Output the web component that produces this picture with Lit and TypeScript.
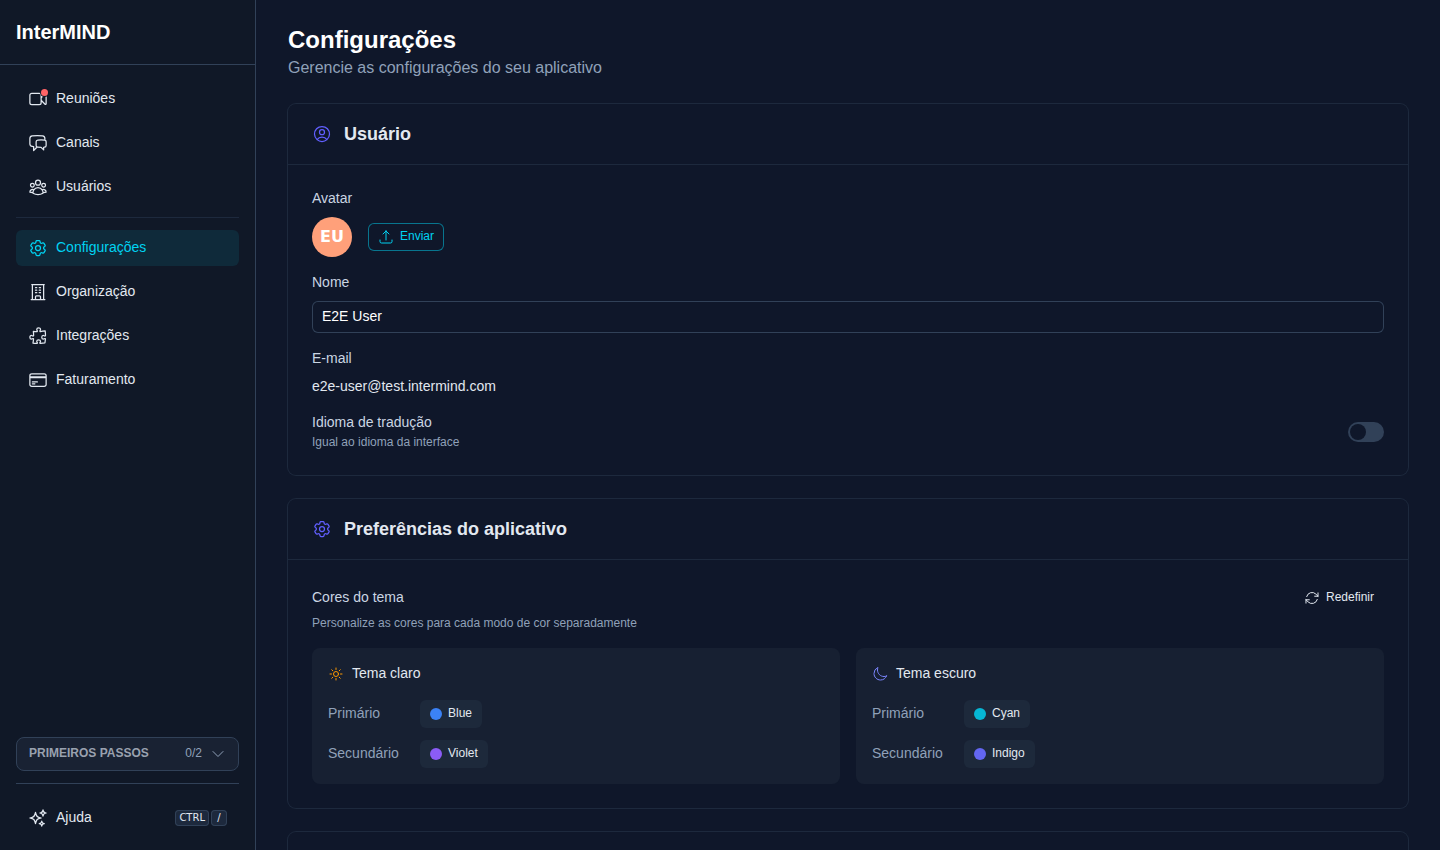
import { LitElement, html, css, svg } from "lit";
import { customElement, property } from "lit/decorators.js";
import { classMap } from "lit/directives/class-map.js";

const ICONS: Record<string, string> = {
  video:
    "m15.75 10.5 4.72-4.72a.75.75 0 0 1 1.28.53v11.38a.75.75 0 0 1-1.28.53l-4.72-4.72M4.5 18.75h9a2.25 2.25 0 0 0 2.25-2.25v-9a2.25 2.25 0 0 0-2.25-2.25h-9A2.25 2.25 0 0 0 2.25 7.5v9a2.25 2.25 0 0 0 2.25 2.25Z",
  chat:
    "M20.25 8.511c.884.284 1.5 1.128 1.5 2.097v4.286c0 1.136-.847 2.1-1.98 2.193-.34.027-.68.052-1.02.072v3.091l-3-3c-1.354 0-2.694-.055-4.02-.163a2.115 2.115 0 0 1-.825-.242m9.345-8.334a2.126 2.126 0 0 0-.476-.095 48.64 48.64 0 0 0-8.048 0c-1.131.094-1.976 1.057-1.976 2.192v4.286c0 .837.46 1.58 1.155 1.951m9.345-8.334V6.637c0-1.621-1.152-3.026-2.76-3.235A48.455 48.455 0 0 0 11.25 3c-2.115 0-4.198.137-6.24.402-1.608.209-2.76 1.614-2.76 3.235v6.226c0 1.621 1.152 3.026 2.76 3.235.577.075 1.157.14 1.74.194V21l4.155-4.155",
  group:
    "M18 18.72a9.094 9.094 0 0 0 3.741-.479 3 3 0 0 0-4.682-2.72m.94 3.198.001.031c0 .225-.012.447-.037.666A11.944 11.944 0 0 1 12 21c-2.17 0-4.207-.576-5.963-1.584A6.062 6.062 0 0 1 6 18.719m12 0a5.971 5.971 0 0 0-.941-3.197m0 0A5.995 5.995 0 0 0 12 12.75a5.995 5.995 0 0 0-5.058 2.772m0 0a3 3 0 0 0-4.681 2.72 8.986 8.986 0 0 0 3.74.477m.94-3.197a5.971 5.971 0 0 0-.94 3.197M15 6.75a3 3 0 1 1-6 0 3 3 0 0 1 6 0Zm6 3a2.25 2.25 0 1 1-4.5 0 2.25 2.25 0 0 1 4.5 0Zm-13.5 0a2.25 2.25 0 1 1-4.5 0 2.25 2.25 0 0 1 4.5 0Z",
  cog:
    "M9.594 3.94c.09-.542.56-.94 1.11-.94h2.593c.55 0 1.02.398 1.11.94l.213 1.281c.063.374.313.686.645.87.074.04.147.083.22.127.325.196.72.257 1.075.124l1.217-.456a1.125 1.125 0 0 1 1.37.49l1.296 2.247a1.125 1.125 0 0 1-.26 1.431l-1.003.827c-.293.241-.438.613-.43.992a7.723 7.723 0 0 1 0 .255c-.008.378.137.75.43.991l1.004.827c.424.35.534.955.26 1.43l-1.298 2.247a1.125 1.125 0 0 1-1.369.491l-1.217-.456c-.355-.133-.75-.072-1.076.124a6.47 6.47 0 0 1-.22.128c-.331.183-.581.495-.644.869l-.213 1.281c-.09.543-.56.94-1.11.94h-2.594c-.55 0-1.019-.398-1.11-.94l-.213-1.281c-.062-.374-.312-.686-.644-.87a6.52 6.52 0 0 1-.22-.127c-.325-.196-.72-.257-1.076-.124l-1.217.456a1.125 1.125 0 0 1-1.369-.49l-1.297-2.247a1.125 1.125 0 0 1 .26-1.431l1.004-.827c.292-.24.437-.613.43-.991a6.932 6.932 0 0 1 0-.255c.007-.38-.138-.751-.43-.992l-1.004-.827a1.125 1.125 0 0 1-.26-1.43l1.297-2.247a1.125 1.125 0 0 1 1.37-.491l1.216.456c.356.133.751.072 1.076-.124.072-.044.146-.086.22-.128.332-.183.582-.495.644-.869l.214-1.28ZM15 12a3 3 0 1 1-6 0 3 3 0 0 1 6 0Z",
  building:
    "M3.75 21h16.5M4.5 3h15M5.25 3v18m13.5-18v18M9 6.75h1.5m-1.5 3h1.5m-1.5 3h1.5m3-6H15m-1.5 3H15m-1.5 3H15M9 21v-3.375c0-.621.504-1.125 1.125-1.125h3.75c.621 0 1.125.504 1.125 1.125V21",
  puzzle:
    "M14.25 6.087c0-.355.186-.676.401-.959.221-.29.349-.634.349-1.003 0-1.036-1.007-1.875-2.25-1.875s-2.25.84-2.25 1.875c0 .369.128.713.349 1.003.215.283.401.604.401.959v0a.64.64 0 0 1-.657.643 48.39 48.39 0 0 1-4.163-.3c.186 1.613.293 3.25.315 4.907a.656.656 0 0 1-.658.663v0c-.355 0-.676-.186-.959-.401a1.647 1.647 0 0 0-1.003-.349c-1.036 0-1.875 1.007-1.875 2.25s.84 2.25 1.875 2.25c.369 0 .713-.128 1.003-.349.283-.215.604-.401.959-.401v0c.31 0 .555.26.532.57a48.039 48.039 0 0 1-.642 5.056c1.518.19 3.058.309 4.616.354a.64.64 0 0 0 .657-.643v0c0-.355-.186-.676-.401-.959a1.647 1.647 0 0 1-.349-1.003c0-1.035 1.008-1.875 2.25-1.875 1.243 0 2.25.84 2.25 1.875 0 .369-.128.713-.349 1.003-.215.283-.4.604-.4.959v0c0 .333.277.599.61.58a48.1 48.1 0 0 0 5.427-.63 48.05 48.05 0 0 0 .582-4.717.532.532 0 0 0-.533-.57v0c-.355 0-.676.186-.959.401-.29.221-.634.349-1.003.349-1.035 0-1.875-1.007-1.875-2.25s.84-2.25 1.875-2.25c.37 0 .713.128 1.003.349.283.215.604.401.96.401v0a.656.656 0 0 0 .658-.663 48.422 48.422 0 0 0-.37-5.36c-1.886.342-3.81.574-5.766.689a.578.578 0 0 1-.61-.58v0Z",
  card:
    "M2.25 8.25h19.5M2.25 9h19.5m-16.5 5.25h6m-6 2.25h3m-3.75 3h15a2.25 2.25 0 0 0 2.25-2.25V6.75A2.25 2.25 0 0 0 19.5 4.5h-15a2.25 2.25 0 0 0-2.25 2.25v10.5A2.25 2.25 0 0 0 4.5 19.5Z",
  sparkles:
    "M9.813 15.904 9 18.75l-.813-2.846a4.5 4.5 0 0 0-3.09-3.09L2.25 12l2.846-.813a4.5 4.5 0 0 0 3.09-3.09L9 5.25l.813 2.846a4.5 4.5 0 0 0 3.09 3.09L15.75 12l-2.846.813a4.5 4.5 0 0 0-3.09 3.09ZM18.259 8.715 18 9.75l-.259-1.035a3.375 3.375 0 0 0-2.455-2.456L14.25 6l1.036-.259a3.375 3.375 0 0 0 2.455-2.456L18 2.25l.259 1.035a3.375 3.375 0 0 0 2.456 2.456L21.75 6l-1.035.259a3.375 3.375 0 0 0-2.456 2.456ZM16.894 20.567 16.5 21.75l-.394-1.183a2.25 2.25 0 0 0-1.423-1.423L13.5 18.75l1.183-.394a2.25 2.25 0 0 0 1.423-1.423l.394-1.183.394 1.183a2.25 2.25 0 0 0 1.423 1.423l1.183.394-1.183.394a2.25 2.25 0 0 0-1.423 1.423Z",
  user:
    "M17.982 18.725A7.488 7.488 0 0 0 12 15.75a7.488 7.488 0 0 0-5.982 2.975m11.963 0a9 9 0 1 0-11.963 0m11.963 0A8.966 8.966 0 0 1 12 21a8.966 8.966 0 0 1-5.982-2.275M15 9.75a3 3 0 1 1-6 0 3 3 0 0 1 6 0Z",
  upload:
    "M3 16.5v2.25A2.25 2.25 0 0 0 5.25 21h13.5A2.25 2.25 0 0 0 21 18.75V16.5m-13.5-9L12 3m0 0 4.5 4.5M12 3v13.5",
  refresh:
    "M16.023 9.348h4.992v-.001M2.985 19.644v-4.992m0 0h4.992m-4.993 0 3.181 3.183a8.25 8.25 0 0 0 13.803-3.7M4.031 9.865a8.25 8.25 0 0 1 13.803-3.7l3.181 3.182m0-4.991v4.99",
  sun:
    "M12 3v2.25m6.364.386-1.591 1.591M21 12h-2.25m-.386 6.364-1.591-1.591M12 18.75V21m-4.773-4.227-1.591 1.591M5.25 12H3m4.227-4.773L5.636 5.636M15.75 12a3.75 3.75 0 1 1-7.5 0 3.75 3.75 0 0 1 7.5 0Z",
  moon:
    "M21.752 15.002A9.72 9.72 0 0 1 18 15.75c-5.385 0-9.75-4.365-9.75-9.75 0-1.33.266-2.597.748-3.752A9.753 9.753 0 0 0 3 11.25C3 16.635 7.365 21 12.75 21a9.753 9.753 0 0 0 9.002-5.998Z",
  chevron: "m19.5 8.25-7.5 7.5-7.5-7.5",
};

@customElement("ui-icon")
class UiIcon extends LitElement {
  @property() name = "";

  static styles = css`
    :host {
      display: block;
      flex: none;
      width: 20px;
      height: 20px;
    }
    .glyph {
      display: block;
      width: 100%;
      height: 100%;
      fill: none;
      stroke: currentColor;
      stroke-width: 1.5;
      stroke-linecap: round;
      stroke-linejoin: round;
    }
  `;

  render() {
    return html`<svg class="glyph" viewBox="0 0 24 24" aria-hidden="true">
      ${svg`<path d=${ICONS[this.name] ?? ""}></path>`}
    </svg>`;
  }
}

interface NavItem {
  label: string;
  icon: string;
  active?: boolean;
  alert?: boolean;
}

const PRIMARY_NAV: NavItem[] = [
  { label: "Reuniões", icon: "video", alert: true },
  { label: "Canais", icon: "chat" },
  { label: "Usuários", icon: "group" },
];

const SETTINGS_NAV: NavItem[] = [
  { label: "Configurações", icon: "cog", active: true },
  { label: "Organização", icon: "building" },
  { label: "Integrações", icon: "puzzle" },
  { label: "Faturamento", icon: "card" },
];

interface ThemePanel {
  title: string;
  icon: string;
  rows: { label: string; color: string; swatch: string }[];
}

const THEMES: ThemePanel[] = [
  {
    title: "Tema claro",
    icon: "sun",
    rows: [
      { label: "Primário", color: "Blue", swatch: "blue" },
      { label: "Secundário", color: "Violet", swatch: "violet" },
    ],
  },
  {
    title: "Tema escuro",
    icon: "moon",
    rows: [
      { label: "Primário", color: "Cyan", swatch: "cyan" },
      { label: "Secundário", color: "Indigo", swatch: "indigo" },
    ],
  },
];

@customElement("app-root")
class AppRoot extends LitElement {
  static styles = css`
    :host {
      display: flex;
      height: 100vh;
      overflow: hidden;
      background: #0f172a;
      color: #e2e8f0;
      font-family: "Liberation Sans", Arial, sans-serif;
      font-size: 14px;
      line-height: 20px;
    }
    * {
      box-sizing: border-box;
    }
    h1,
    h2,
    h3,
    p {
      margin: 0;
    }
    button,
    input {
      margin: 0;
      font: inherit;
      color: inherit;
    }
    button {
      cursor: pointer;
    }
    .small {
      width: 16px;
      height: 16px;
    }

    /* sidebar */
    .sidebar {
      display: flex;
      flex-direction: column;
      flex: none;
      width: 256px;
      background: #101827;
      border-right: 1px solid #314158;
    }
    .brand {
      padding: 16px;
      border-bottom: 1px solid #314158;
      color: #ffffff;
      font-size: 20px;
      font-weight: 700;
      line-height: 32px;
    }
    .nav {
      display: flex;
      flex-direction: column;
      flex: 1;
      padding: 16px 16px 0;
    }
    .nav-list {
      display: flex;
      flex-direction: column;
      gap: 8px;
      margin: 0;
      padding: 0;
      list-style: none;
    }
    .nav-list + .nav-list {
      margin-top: 12px;
      padding-top: 12px;
      border-top: 1px solid #1d293d;
    }
    .nav-link {
      display: flex;
      align-items: center;
      gap: 8px;
      width: 100%;
      height: 36px;
      padding: 0 12px;
      border: 0;
      border-radius: 6px;
      background: none;
      color: #e2e8f0;
      text-align: left;
      text-decoration: none;
    }
    .nav-text {
      padding-bottom: 2px;
    }
    .nav-link.active {
      background: #0f2a3a;
      color: #00d3f2;
    }
    .nav-icon {
      position: relative;
    }
    .badge {
      position: absolute;
      top: 0;
      right: 0;
      width: 7px;
      height: 7px;
      border-radius: 50%;
      background: #ff6467;
      box-shadow: 0 0 0 1px #101827;
    }
    .sidebar-foot {
      display: flex;
      flex-direction: column;
      padding: 0 16px 14px;
    }
    .steps {
      display: flex;
      align-items: center;
      gap: 8px;
      height: 34px;
      padding: 0 12px;
      border: 1px solid #314158;
      border-radius: 8px;
      background: #192233;
      color: #90a1b9;
      font-size: 12px;
      line-height: 16px;
    }
    .steps-title {
      flex: 1;
      padding-bottom: 2px;
      text-align: left;
      font-weight: 700;
      color: #99a1af;
    }
    .steps-count {
      padding-bottom: 2px;
    }
    .help {
      margin-top: 12px;
      padding-top: 16px;
      border-top: 1px solid #314158;
    }
    .help-text {
      flex: 1;
    }
    .keys {
      display: flex;
      gap: 2px;
    }
    .key {
      display: flex;
      align-items: center;
      justify-content: center;
      min-width: 16px;
      height: 16px;
      padding: 0 4px;
      border-radius: 4px;
      background: #1d293d;
      box-shadow: inset 0 0 0 1px #314158;
      font-family: "DejaVu Sans", sans-serif;
      font-size: 10px;
      line-height: 16px;
    }

    /* page */
    .page {
      display: flex;
      flex-direction: column;
      gap: 24px;
      flex: 1;
      min-width: 0;
      padding: 24px 32px;
      overflow: auto;
      scrollbar-width: none;
    }
    .page-title {
      color: #ffffff;
      font-size: 24px;
      line-height: 32px;
    }
    .page-lead {
      color: #90a1b9;
      font-size: 16px;
      line-height: 24px;
    }
    .card {
      flex: none;
      border-radius: 8px;
      background: #0f172a;
      box-shadow: 0 0 0 1px #1d293d;
    }
    .card-head {
      display: flex;
      align-items: center;
      gap: 12px;
      min-height: 60px;
      padding: 16px 24px;
    }
    .card-icon {
      color: #615fff;
    }
    .card-title {
      font-size: 18px;
      line-height: 28px;
    }
    .card-body {
      padding: 24px;
      border-top: 1px solid #1d293d;
    }
    .form {
      display: flex;
      flex-direction: column;
      gap: 16px;
    }
    .field {
      display: flex;
      flex-direction: column;
      gap: 8px;
    }
    .line {
      padding-bottom: 2px;
      font-size: 14px;
      font-weight: 400;
      line-height: 18px;
    }
    .label {
      color: #cad5e2;
    }
    .avatar-row {
      display: flex;
      align-items: center;
      gap: 16px;
    }
    .avatar {
      display: flex;
      align-items: center;
      justify-content: center;
      width: 40px;
      height: 40px;
      border-radius: 50%;
      background: #ffa07a;
      color: #ffffff;
      font-family: "DejaVu Sans", sans-serif;
      font-size: 16px;
      font-weight: 700;
    }
    .btn {
      display: inline-flex;
      align-items: center;
      gap: 6px;
      height: 28px;
      padding: 0 10px;
      border: 0;
      border-radius: 6px;
      background: none;
      font-size: 12px;
      line-height: 16px;
    }
    .btn-text {
      padding-bottom: 2px;
    }
    .btn-outline {
      color: #00d3f2;
      box-shadow: inset 0 0 0 1px #08758e;
    }
    .input {
      width: 100%;
      height: 32px;
      padding: 0 10px 2px;
      border: 0;
      border-radius: 6px;
      background: #0f172a;
      box-shadow: inset 0 0 0 1px #314158;
      color: #ffffff;
      outline: none;
    }
    .toggle-row {
      display: flex;
      align-items: center;
      justify-content: space-between;
    }
    .hint {
      padding-bottom: 2px;
      color: #90a1b9;
      font-size: 12px;
      line-height: 14px;
    }
    .toggle-text {
      display: flex;
      flex-direction: column;
      gap: 2px;
    }
    .switch {
      appearance: none;
      width: 36px;
      height: 20px;
      padding: 2px;
      border-radius: 10px;
      background: #314158;
    }
    .switch::before {
      content: "";
      display: block;
      width: 16px;
      height: 16px;
      border-radius: 50%;
      background: #0f172a;
    }
    .switch:checked {
      background: #00d3f2;
    }
    .switch:checked::before {
      margin-left: auto;
    }
    .colors-head {
      display: flex;
      align-items: center;
      justify-content: space-between;
      margin-bottom: 4px;
    }
    .themes {
      display: grid;
      grid-template-columns: repeat(auto-fit, minmax(320px, 1fr));
      gap: 16px;
      margin-top: 16px;
    }
    .theme {
      display: grid;
      gap: 16px;
      padding: 16px;
      border-radius: 8px;
      background: #172032;
    }
    .theme-head {
      display: flex;
      align-items: center;
      gap: 8px;
    }
    .sun {
      color: #fe9a00;
    }
    .moon {
      color: #7c86ff;
    }
    .color-rows {
      display: grid;
      gap: 12px;
    }
    .color-row {
      display: flex;
      align-items: center;
      gap: 12px;
    }
    .color-label {
      width: 80px;
      color: #90a1b9;
    }
    .chip {
      background: #1d293b;
    }
    .swatch {
      width: 12px;
      height: 12px;
      border-radius: 50%;
    }
    .blue {
      background: #3b82f6;
    }
    .violet {
      background: #8b5cf6;
    }
    .cyan {
      background: #06b6d4;
    }
    .indigo {
      background: #6366f1;
    }
  `;

  private navList(items: NavItem[]) {
    return html`<ul class="nav-list">
      ${items.map(
        (item) => html`<li>
          <a
            class=${classMap({ "nav-link": true, active: !!item.active })}
            href="#"
          >
            <span class="nav-icon">
              <ui-icon name=${item.icon}></ui-icon>
              ${item.alert ? html`<span class="badge"></span>` : ""}
            </span>
            <span class="nav-text">${item.label}</span>
          </a>
        </li>`
      )}
    </ul>`;
  }

  private themePanel(theme: ThemePanel) {
    return html`<section class="theme">
      <div class="theme-head">
        <ui-icon class="small ${theme.icon}" name=${theme.icon}></ui-icon>
        <h3 class="line">${theme.title}</h3>
      </div>
      <div class="color-rows">
        ${theme.rows.map(
          (row) => html`<div class="color-row">
            <span class="line color-label">${row.label}</span>
            <button class="btn chip" type="button">
              <span class="swatch ${row.swatch}"></span>
              <span class="btn-text">${row.color}</span>
            </button>
          </div>`
        )}
      </div>
    </section>`;
  }

  render() {
    return html`
      <aside class="sidebar">
        <div class="brand">InterMIND</div>
        <nav class="nav">
          ${this.navList(PRIMARY_NAV)} ${this.navList(SETTINGS_NAV)}
        </nav>
        <div class="sidebar-foot">
          <button class="steps" type="button">
            <span class="steps-title">PRIMEIROS PASSOS</span>
            <span class="steps-count">0/2</span>
            <ui-icon class="small" name="chevron"></ui-icon>
          </button>
          <div class="help">
            <button class="nav-link" type="button">
              <ui-icon name="sparkles"></ui-icon>
              <span class="nav-text help-text">Ajuda</span>
              <span class="keys">
                <kbd class="key">CTRL</kbd><kbd class="key">/</kbd>
              </span>
            </button>
          </div>
        </div>
      </aside>

      <main class="page">
        <header>
          <h1 class="page-title">Configurações</h1>
          <p class="page-lead">Gerencie as configurações do seu aplicativo</p>
        </header>

        <section class="card">
          <div class="card-head">
            <ui-icon class="card-icon" name="user"></ui-icon>
            <h2 class="card-title">Usuário</h2>
          </div>
          <div class="card-body form">
            <div class="field">
              <span class="line label">Avatar</span>
              <div class="avatar-row">
                <span class="avatar">EU</span>
                <button class="btn btn-outline" type="button">
                  <ui-icon class="small" name="upload"></ui-icon>
                  <span class="btn-text">Enviar</span>
                </button>
              </div>
            </div>
            <div class="field">
              <label class="line label" for="name">Nome</label>
              <input class="input" id="name" type="text" value="E2E User" />
            </div>
            <div class="field">
              <span class="line label">E-mail</span>
              <span class="line">e2e-user@test.intermind.com</span>
            </div>
            <div class="toggle-row">
              <div class="toggle-text">
                <label class="line label" for="language">Idioma de tradução</label>
                <p class="hint">Igual ao idioma da interface</p>
              </div>
              <input class="switch" id="language" type="checkbox" role="switch" />
            </div>
          </div>
        </section>

        <section class="card">
          <div class="card-head">
            <ui-icon class="card-icon" name="cog"></ui-icon>
            <h2 class="card-title">Preferências do aplicativo</h2>
          </div>
          <div class="card-body">
            <div class="colors-head">
              <h3 class="line label">Cores do tema</h3>
              <button class="btn" type="button">
                <ui-icon class="small" name="refresh"></ui-icon>
                <span class="btn-text">Redefinir</span>
              </button>
            </div>
            <p class="hint">
              Personalize as cores para cada modo de cor separadamente
            </p>
            <div class="themes">${THEMES.map((t) => this.themePanel(t))}</div>
          </div>
        </section>

        <section class="card">
          <div class="card-head"></div>
        </section>
      </main>
    `;
  }
}
